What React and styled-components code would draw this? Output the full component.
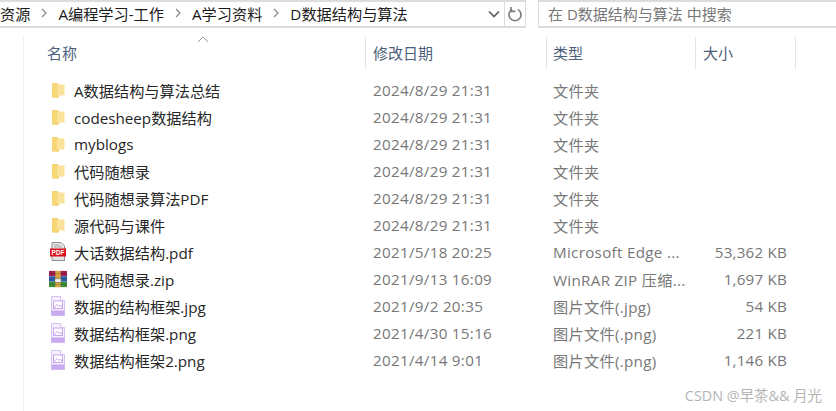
import styled, { createGlobalStyle } from "styled-components";

const GlobalStyle = createGlobalStyle`
  html, body { margin: 0; padding: 0; background: #fff; }
  body { font-family: "Open Sans", "Noto Sans CJK SC", sans-serif; }
`;

const files = [
  { name: "A数据结构与算法总结", date: "2024/8/29 21:31", type: "文件夹", size: "", icon: "folder" },
  { name: "codesheep数据结构", date: "2024/8/29 21:31", type: "文件夹", size: "", icon: "folder" },
  { name: "myblogs", date: "2024/8/29 21:31", type: "文件夹", size: "", icon: "folder" },
  { name: "代码随想录", date: "2024/8/29 21:31", type: "文件夹", size: "", icon: "folder" },
  { name: "代码随想录算法PDF", date: "2024/8/29 21:31", type: "文件夹", size: "", icon: "folder" },
  { name: "源代码与课件", date: "2024/8/29 21:31", type: "文件夹", size: "", icon: "folder" },
  { name: "大话数据结构.pdf", date: "2021/5/18 20:25", type: "Microsoft Edge ...", size: "53,362 KB", icon: "pdf" },
  { name: "代码随想录.zip", date: "2021/9/13 16:09", type: "WinRAR ZIP 压缩...", size: "1,697 KB", icon: "zip" },
  { name: "数据的结构框架.jpg", date: "2021/9/2 20:35", type: "图片文件(.jpg)", size: "54 KB", icon: "image" },
  { name: "数据结构框架.png", date: "2021/4/30 15:16", type: "图片文件(.png)", size: "221 KB", icon: "image" },
  { name: "数据结构框架2.png", date: "2021/4/14 9:01", type: "图片文件(.png)", size: "1,146 KB", icon: "image" },
];

const crumbs = ["资源", "A编程学习-工作", "A学习资料", "D数据结构与算法"];

const Window = styled.div`
  position: relative;
  width: 836px;
  height: 411px;
  overflow: hidden;
  background: #fff;
`;

const Toolbar = styled.div`
  display: flex;
  height: 28px;
  gap: 12px;
`;

const AddressBar = styled.div`
  width: 526px;
  box-sizing: border-box;
  display: flex;
  align-items: center;
  border-top: 2px solid #dcdcdc;
  border-bottom: 2px solid #dcdcdc;
  border-right: 1px solid #dcdcdc;
  overflow: hidden;
`;

const Crumbs = styled.div`
  flex: 1;
  display: flex;
  align-items: center;
  gap: 10px;
  font-size: 15.2px;
  color: #1a1a1a;
  white-space: nowrap;
  margin-top: -2px;
`;

const ChevronBox = styled.div`
  width: 20px;
  height: 24px;
  display: flex;
  align-items: center;
  justify-content: center;
`;

const RefreshBox = styled.div`
  width: 20px;
  height: 24px;
  display: flex;
  align-items: center;
  justify-content: center;
  border-left: 1px solid #dcdcdc;
`;

const SearchBox = styled.div`
  flex: 1;
  box-sizing: border-box;
  display: flex;
  align-items: center;
  padding: 0 0 2px 9px;
  border-top: 2px solid #dcdcdc;
  border-bottom: 2px solid #dcdcdc;
  border-left: 1px solid #dcdcdc;
  font-size: 15px;
  color: #777;
  white-space: nowrap;
`;

const Body = styled.div`
  margin: 9px 0 0 23px;
  height: 374px;
  border-left: 1px solid #eeeeee;
`;

const columns = "342px 181px 149px 100px";

const Header = styled.div`
  display: grid;
  grid-template-columns: ${columns};
  height: 32px;
  position: relative;
`;

const HeaderCell = styled.div`
  box-sizing: border-box;
  display: flex;
  align-items: center;
  padding-left: ${(p) => p.$pad}px;
  padding-bottom: 2px;
  border-right: 1px solid #e3e3e3;
  font-size: 15px;
  color: #4c607a;
`;

const SortArrow = styled.svg`
  position: absolute;
  left: 173px;
  top: -1px;
`;

const Rows = styled.div`
  margin-top: 7px;
`;

const Row = styled.div`
  display: grid;
  grid-template-columns: ${columns};
  height: 27px;
  align-items: center;
  font-size: 15.2px;
  white-space: nowrap;
`;

const NameCell = styled.div`
  display: flex;
  align-items: center;
  padding-left: 25px;
  gap: 7px;
  color: #262626;
`;

const IconSlot = styled.span`
  width: 18px;
  height: 18px;
  display: flex;
  align-items: center;
  justify-content: center;
  flex: none;
`;

const MetaCell = styled.div`
  padding-left: ${(p) => p.$pad}px;
  color: #777;
  letter-spacing: 0.3px;
`;

const SizeCell = styled.div`
  padding-right: 9px;
  text-align: right;
  color: #777;
  letter-spacing: 0.2px;
`;

const Watermark = styled.div`
  position: absolute;
  right: 14px;
  bottom: 6px;
  font-size: 14.4px;
  color: #b4b4b4;
  white-space: nowrap;
`;

function CrumbChevron() {
  return (
    <svg width="8" height="10" viewBox="0 0 8 10">
      <path d="M2 1l4 4-4 4" fill="none" stroke="#8a8a8a" strokeWidth="1.3" />
    </svg>
  );
}

function FolderIcon() {
  return (
    <svg width="14" height="18" viewBox="0 0 14 18">
      <path d="M1 2h5l2 1.5v13H1z" fill="#f0cc6a" />
      <path d="M4 3.5h9.5v11H4z" fill="#fbe29a" />
      <path d="M1 2l5 1.5V17L1 15.5z" fill="#f7d675" />
    </svg>
  );
}

function PdfIcon() {
  return (
    <svg width="18" height="19" viewBox="0 0 18 19">
      <path d="M3 .5h9l3.5 3.5v14.5H3z" fill="#e6e6e6" stroke="#8d8d8d" />
      <path d="M5 3h6M5 5h8" stroke="#a5a5a5" />
      <rect x="1" y="6.5" width="16" height="8" fill="#d8111b" />
      <text x="9" y="13" fontSize="6.4" fontWeight="700" fill="#fff" textAnchor="middle" fontFamily="Liberation Sans, sans-serif">PDF</text>
    </svg>
  );
}

function ZipIcon() {
  return (
    <svg width="20" height="18" viewBox="0 0 20 18">
      <rect x="0" y="0" width="20" height="6" fill="#a3214f" />
      <rect x="0" y="6" width="20" height="6" fill="#2e5fb0" />
      <rect x="0" y="12" width="20" height="6" fill="#3f8f3a" />
      <rect x="7" y="0" width="6" height="18" fill="#d9a441" />
      <rect x="6.5" y="8" width="7" height="5" fill="#f1efe6" stroke="#5a4a2a" strokeWidth="0.6" />
      <path d="M0 3h20M0 9h20M0 15h20" stroke="#000" strokeOpacity="0.2" />
    </svg>
  );
}

function ImageIcon() {
  return (
    <svg width="16" height="20" viewBox="0 0 16 20">
      <path d="M1.5.5h9l4 4v15h-13z" fill="#f6efff" stroke="#d9c3f2" />
      <path d="M10.5.5v4h4" fill="#ffffff" stroke="#d9c3f2" />
      <rect x="3.5" y="5" width="9" height="7.5" fill="#fff" stroke="#c7a8ec" />
      <path d="M4 12l3-3.5 2 2 1.5-1.5 2 3" fill="none" stroke="#c7a8ec" />
      <rect x="1.5" y="14.5" width="13" height="5" fill="#c9a9ef" />
    </svg>
  );
}

const icons = { folder: FolderIcon, pdf: PdfIcon, zip: ZipIcon, image: ImageIcon };

export default function App() {
  return (
    <Window>
      <GlobalStyle />
      <Toolbar>
        <AddressBar>
          <Crumbs>
            {crumbs.map((crumb, i) => (
              <>
                {i > 0 && <CrumbChevron />}
                <span>{crumb}</span>
              </>
            ))}
          </Crumbs>
          <ChevronBox>
            <svg width="12" height="8" viewBox="0 0 12 8">
              <path d="M1 1.5l5 5 5-5" fill="none" stroke="#5f5f5f" strokeWidth="1.7" />
            </svg>
          </ChevronBox>
          <RefreshBox>
            <svg width="16" height="17" viewBox="0 0 16 17">
              <path d="M10.8 3.4a6 6 0 1 1-5.6 0" fill="none" stroke="#7a7a7a" strokeWidth="1.6" />
              <path d="M4 1v4.4h4.4" fill="none" stroke="#7a7a7a" strokeWidth="1.6" />
            </svg>
          </RefreshBox>
        </AddressBar>
        <SearchBox>在 D数据结构与算法 中搜索</SearchBox>
      </Toolbar>
      <Body>
        <Header>
          <SortArrow width="12" height="7" viewBox="0 0 12 7">
            <path d="M1 6l5-5 5 5" fill="none" stroke="#9a9a9a" />
          </SortArrow>
          <HeaderCell $pad={23}>名称</HeaderCell>
          <HeaderCell $pad={7}>修改日期</HeaderCell>
          <HeaderCell $pad={6}>类型</HeaderCell>
          <HeaderCell $pad={7}>大小</HeaderCell>
        </Header>
        <Rows>
          {files.map((file) => {
            const Icon = icons[file.icon];
            return (
              <Row key={file.name}>
                <NameCell>
                  <IconSlot><Icon /></IconSlot>
                  {file.name}
                </NameCell>
                <MetaCell $pad={7}>{file.date}</MetaCell>
                <MetaCell $pad={6}>{file.type}</MetaCell>
                <SizeCell>{file.size}</SizeCell>
              </Row>
            );
          })}
        </Rows>
      </Body>
      <Watermark>CSDN @早茶&amp;&amp; 月光</Watermark>
    </Window>
  );
}
